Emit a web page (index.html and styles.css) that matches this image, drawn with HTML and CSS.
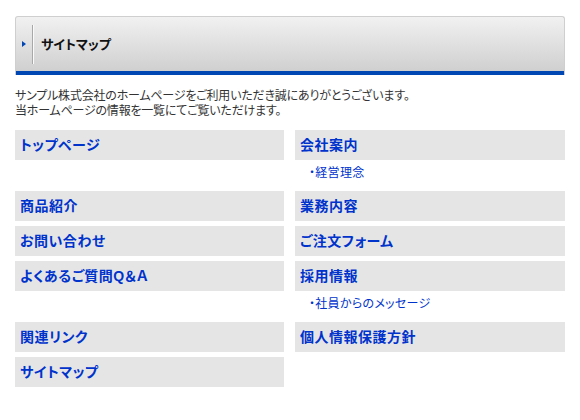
FILE: index.html
```html
<!DOCTYPE html>
<html lang="ja">
<head>
    <meta charset="UTF-8">
    <title>サイトマップ</title>
    <link rel="stylesheet" href="styles.css">
</head>
<body>

    <!-- ページタイトル -->
    <div class="page-title">
        <span class="arrow"></span>
        <h1>サイトマップ</h1>
    </div>

    <p class="lead">
        サンプル株式会社のホームページをご利用いただき誠にありがとうございます。<br>
        当ホームページの情報を一覧にてご覧いただけます。
    </p>

    <!-- サイトマップ一覧 -->
    <div class="sitemap">
        <div class="item">
            <a class="head" href="#">トップページ</a>
        </div>
        <div class="item">
            <a class="head" href="#">会社案内</a>
            <ul class="sub">
                <li><a href="#">・経営理念</a></li>
            </ul>
        </div>

        <div class="item"><a class="head" href="#">商品紹介</a></div>
        <div class="item"><a class="head" href="#">業務内容</a></div>

        <div class="item"><a class="head" href="#">お問い合わせ</a></div>
        <div class="item"><a class="head" href="#">ご注文フォーム</a></div>

        <div class="item">
            <a class="head" href="#">よくあるご質問Q＆Ａ</a>
        </div>
        <div class="item">
            <a class="head" href="#">採用情報</a>
            <ul class="sub">
                <li><a href="#">・社員からのメッセージ</a></li>
            </ul>
        </div>

        <div class="item"><a class="head" href="#">関連リンク</a></div>
        <div class="item"><a class="head" href="#">個人情報保護方針</a></div>

        <div class="item"><a class="head" href="#">サイトマップ</a></div>
    </div>

</body>
</html>
```

FILE: styles.css
```css
* {
    margin: 0;
    padding: 0;
    box-sizing: border-box;
}

body {
    font-family: "Liberation Sans", "Noto Sans CJK JP", sans-serif;
    font-feature-settings: "palt";
    background-color: #fff;
    color: #333;
    width: 580px;
    padding: 16px 15px 0 15px;
}

/* ページタイトル */
.page-title {
    display: flex;
    align-items: center;
    height: 59px;
    padding: 0 0 4px 0;
    border: 1px solid #cfcfcf;
    border-bottom: none;
    border-radius: 3px 3px 0 0;
    background: linear-gradient(#f1f1f1, #cdcdcd);
    box-shadow: inset 0 -4px 0 #0047b3;
}

.page-title .arrow {
    width: 0;
    height: 0;
    margin-left: 6px;
    border-top: 3px solid transparent;
    border-bottom: 3px solid transparent;
    border-left: 4px solid #0047b3;
}

.page-title h1 {
    font-size: 13px;
    font-weight: bold;
    color: #111;
    margin-left: 6px;
    padding-left: 8px;
    height: 39px;
    line-height: 39px;
    border-left: 1px solid #a8a8a8;
    box-shadow: inset 1px 0 0 #fafafa;
}

.lead {
    font-size: 12px;
    line-height: 15px;
    margin-top: 14px;
    letter-spacing: -0.2px;
}

/* 一覧 */
.sitemap {
    display: grid;
    grid-template-columns: 269px 270px;
    column-gap: 11px;
    row-gap: 5px;
    margin-top: 11px;
}

.item .head {
    display: block;
    height: 30px;
    line-height: 30px;
    padding-left: 5px;
    background-color: #e5e5e5;
    color: #0033cc;
    font-size: 14px;
    font-weight: bold;
    letter-spacing: 0.5px;
    text-decoration: none;
}

.sub {
    list-style: none;
    padding: 3px 0 4px 14px;
}

.sub a {
    font-size: 12px;
    line-height: 18px;
    color: #0033cc;
    text-decoration: none;
    letter-spacing: 0.3px;
}
```
